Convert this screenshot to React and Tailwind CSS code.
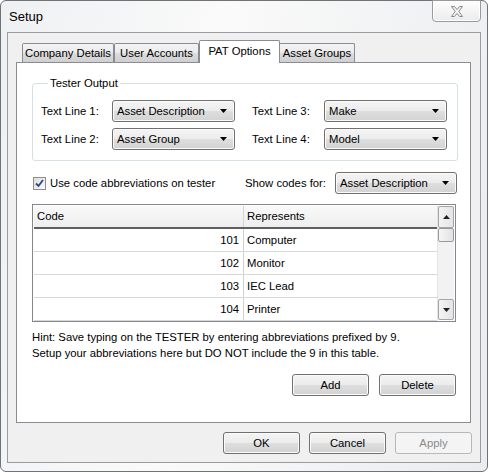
import React from 'react'
import clsx from 'clsx'

const btnFace =
  'border border-[#707070] rounded-[3px] bg-[linear-gradient(#f4f4f4,#ececec_48%,#dedede_52%,#d2d2d2)] shadow-[inset_0_0_0_1px_#fbfbfb]'

function Button({ children, disabled }) {
  return (
    <div
      className={clsx(
        'h-[22px] w-[77px] flex items-center justify-center',
        disabled
          ? 'border border-[#b5b9bc] rounded-[3px] bg-[#f4f4f4] text-[#8b8b8b]'
          : clsx(btnFace, 'text-black')
      )}
    >
      {children}
    </div>
  )
}

function Arrow() {
  return (
    <svg width="7" height="4" viewBox="0 0 7 4">
      <path d="M0 0H7L3.5 4Z" fill="#000" />
    </svg>
  )
}

function Combo({ value, className }) {
  return (
    <div className={clsx(btnFace, 'h-[22px] flex items-center justify-between pl-[4px] pr-[7px]', className)}>
      <span>{value}</span>
      <Arrow />
    </div>
  )
}

function Tab({ label, active, className }) {
  return (
    <div
      className={clsx(
        'flex items-center justify-center border border-[#898c95] border-b-0 rounded-t-[2px]',
        active
          ? 'relative z-10 h-[23px] mb-[-1px] bg-white pb-[2px]'
          : 'h-[19px] bg-[linear-gradient(#f3f3f3,#ebebeb_50%,#dddddd_51%,#cfcfcf)]',
        className
      )}
    >
      {label}
    </div>
  )
}

function CloseGlyph() {
  return (
    <svg width="14" height="11" viewBox="0 0 14 11">
      <polygon
        points="1.5,0.5 4.5,0.5 7,3.5 9.5,0.5 12.5,0.5 8.8,5.5 12.5,10.5 9.5,10.5 7,7.5 4.5,10.5 1.5,10.5 5.2,5.5"
        fill="#f2f2f2"
        stroke="#8a8a8a"
        strokeWidth="1"
        strokeLinejoin="round"
      />
    </svg>
  )
}

const rows = [
  ['101', 'Computer'],
  ['102', 'Monitor'],
  ['103', 'IEC Lead'],
  ['104', 'Printer'],
]

function ScrollBtn({ up, className }) {
  return (
    <div
      className={clsx(
        'flex items-center justify-center border border-[#a4a4a4] rounded-[2px] bg-[linear-gradient(90deg,#f4f4f4,#e4e4e4)]',
        className
      )}
    >
      <svg width="7" height="4" viewBox="0 0 7 4">
        <path d={up ? 'M0 4H7L3.5 0Z' : 'M0 0H7L3.5 4Z'} fill="#222" />
      </svg>
    </div>
  )
}

export default function App() {
  return (
    <div className="w-[488px] h-[472px] bg-white font-['Liberation_Sans',Arial,sans-serif] text-[11.3px] text-black overflow-hidden">
      <div className="w-[488px] h-[472px] flex flex-col border border-[#6e7378] rounded-[6px] bg-[linear-gradient(100deg,#eef0f2_0%,#fafafa_40%,#f2f3f4_70%,#eaeced_100%)]">
        {/* title bar */}
        <div className="h-[31px] flex items-start">
          <div className="pl-[8px] pt-[8px] text-[13px] leading-[16px]">Setup</div>
          <div className="ml-auto mr-[6px] mt-[-1px] w-[49px] h-[22px] flex items-center justify-center border border-[#9a9a9a] rounded-b-[4px] bg-[linear-gradient(#fdfdfd,#ececec)] shadow-[inset_0_0_0_1px_#ffffff]">
            <CloseGlyph />
          </div>
        </div>

        {/* client area */}
        <div className="mx-[6px] h-[431px] border border-[#9a9c9e] bg-[#f0f0f0] flex flex-col pt-[7px]">
          <div className="flex items-end ml-[14px]">
            <Tab label="Company Details" className="w-[92px]" />
            <Tab label="User Accounts" className="w-[85px]" />
            <Tab label="PAT Options" active className="w-[81px]" />
            <Tab label="Asset Groups" className="w-[76px] ml-[-1px]" />
          </div>

          <div className="ml-[8px] w-[455px] h-[361px] border border-[#898c95] bg-white flex flex-col pl-[15px] pt-[13px]">
            <fieldset className="w-[426px] border border-[#d5dfe5] rounded-[3px] pl-[8px] pt-[9px] pb-[10px]">
              <legend className="ml-[7px] px-[2px] leading-[15px]">Tester Output</legend>
              <div className="flex flex-col gap-[6px]">
                <div className="flex items-center">
                  <div className="w-[71px]">Text Line 1:</div>
                  <Combo value="Asset Description" className="w-[123px]" />
                  <div className="w-[72px] ml-[17px]">Text Line 3:</div>
                  <Combo value="Make" className="w-[123px]" />
                </div>
                <div className="flex items-center">
                  <div className="w-[71px]">Text Line 2:</div>
                  <Combo value="Asset Group" className="w-[123px]" />
                  <div className="w-[72px] ml-[17px]">Text Line 4:</div>
                  <Combo value="Model" className="w-[123px]" />
                </div>
              </div>
            </fieldset>

            <div className="mt-[11px] w-[425px] h-[22px] flex items-center">
              <div className="ml-[1px] w-[13px] h-[13px] border border-[#8e8f8f] bg-[linear-gradient(135deg,#dcdcdc,#fbfbfb)] flex items-center justify-center">
                <svg width="9" height="9" viewBox="0 0 9 9">
                  <path d="M1 4.5L3.5 7L8 1" fill="none" stroke="#2a4591" strokeWidth="1.8" />
                </svg>
              </div>
              <div className="ml-[4px]">Use code abbreviations on tester</div>
              <div className="ml-auto mr-[9px]">Show codes for:</div>
              <Combo value="Asset Description" className="w-[122px]" />
            </div>

            <div className="mt-[10px] w-[424px] h-[118px] border border-[#828790] p-[1px] flex overflow-hidden">
              <div className="flex-1 flex flex-col">
                <div className="h-[23px] shrink-0 flex bg-[linear-gradient(#f9f9f9,#eeeeee)] border-b-[2px] border-[#5f5f5f]">
                  <div className="w-[210px] pl-[3px] flex items-center border-r border-[#d5d5d5]">Code</div>
                  <div className="flex-1 pl-[3px] flex items-center">Represents</div>
                </div>
                {rows.map(([code, name]) => (
                  <div key={code} className="h-[23px] shrink-0 flex border-b border-[#d8d8d8]">
                    <div className="w-[210px] pr-[4px] flex items-center justify-end border-r border-[#d0d0d0]">{code}</div>
                    <div className="flex-1 pl-[3px] flex items-center">{name}</div>
                  </div>
                ))}
              </div>
              <div className="w-[17px] flex flex-col bg-[#f2f2f2] border-l border-[#e4e4e4]">
                <ScrollBtn up className="h-[22px]" />
                <div className="h-[14px] border border-[#9a9a9a] rounded-[2px] bg-[linear-gradient(90deg,#f6f6f6,#e2e2e2)]" />
                <div className="flex-1" />
                <ScrollBtn className="h-[21px]" />
              </div>
            </div>

            <div className="mt-[7px] leading-[16px]">
              <div>Hint: Save typing on the TESTER by entering abbreviations prefixed by 9.</div>
              <div>Setup your abbreviations here but DO NOT include the 9 in this table.</div>
            </div>

            <div className="mt-[13px] w-[424px] flex justify-end gap-[10px]">
              <Button>Add</Button>
              <Button>Delete</Button>
            </div>
          </div>

          <div className="mt-[9px] flex justify-end gap-[9px] pr-[8px]">
            <Button>OK</Button>
            <Button>Cancel</Button>
            <Button disabled>Apply</Button>
          </div>
        </div>
      </div>
    </div>
  )
}
